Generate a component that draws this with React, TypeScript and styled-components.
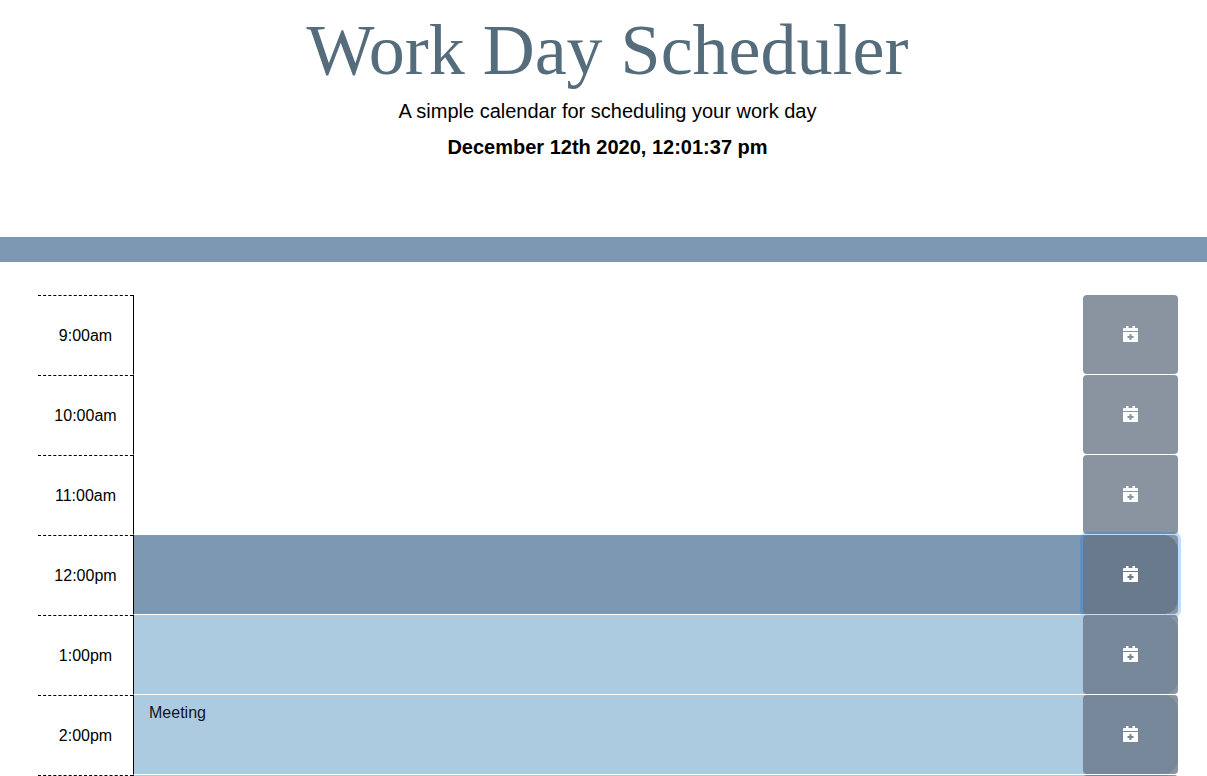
import React from "react";
import styled, { createGlobalStyle } from "styled-components";

const GlobalStyle = createGlobalStyle`
  *, *::before, *::after { box-sizing: border-box; }
  html { scrollbar-width: none; }
  body {
    margin: 0;
    background: #ffffff;
    color: #000000;
    font-family: "Liberation Sans", Arial, sans-serif;
    font-size: 16px;
    line-height: 24px;
  }
`;

type Phase = "past" | "present" | "future";

const phaseColor: Record<Phase, string> = {
  past: "#ffffff",
  present: "#7d98b3",
  future: "#adcbe0",
};

const Header = styled.header`
  padding: 5px 0 74px 8px;
  text-align: center;
  border-bottom: 25px solid #7d98b3;
`;

const Title = styled.h1`
  margin: 0;
  color: #546c7b;
  font-family: "Liberation Serif", "Times New Roman", serif;
  font-size: 72px;
  font-weight: 400;
  line-height: 90px;
`;

const Lead = styled.p<{ $strong?: boolean }>`
  margin: 0 0 4px;
  font-size: 20px;
  line-height: 32px;
  font-weight: ${(p) => (p.$strong ? 700 : 400)};

  &:last-child { margin-bottom: 0; }
`;

const Schedule = styled.main`
  padding: 33px 29px 0 38px;
`;

const Row = styled.div`
  display: grid;
  grid-template-columns: 1fr 10fr 1fr;
  height: 80px;
`;

const Hour = styled.label`
  grid-area: 1 / 1;
  display: flex;
  align-items: center;
  justify-content: center;
  border-top: 1px dashed #000000;
`;

const Entry = styled.textarea<{ $phase: Phase }>`
  grid-area: 1 / 2 / 2 / 4;
  width: 100%;
  height: 100%;
  margin: 0;
  padding: 6px 110px 6px 15px;
  border: 0;
  border-left: 1px solid #000000;
  border-bottom: 1px solid #ffffff;
  border-radius: 0 15px 15px 0;
  outline: 0;
  resize: none;
  overflow: hidden;
  background: ${(p) => phaseColor[p.$phase]};
  color: #10161c;
  font: inherit;
`;

const SaveButton = styled.button<{ $active?: boolean }>`
  grid-area: 1 / 3;
  display: flex;
  align-items: center;
  justify-content: center;
  margin: 0 0 1px;
  padding: 0;
  border: 0;
  border-radius: 4px;
  background: rgba(99, 112, 128, 0.75);
  box-shadow: ${(p) => (p.$active ? "0 0 0 3px rgba(0, 123, 255, 0.25)" : "none")};
  color: #ffffff;
  cursor: pointer;
`;

const CalendarPlus = () => (
  <svg width="15" height="17" viewBox="0 0 15 17" fill="currentColor" aria-hidden="true">
    <path d="M0 5V3Q0 2 1 2H3V0H5.500V2H9.500V0H12V2H14Q15 2 15 3V5Z" />
    <path
      fillRule="evenodd"
      d="M0 6H15V15.200Q15 16 14.200 16H0.800Q0 16 0 15.200ZM6.500 8V10H4.500V12H6.500V14H8.500V12H10.500V10H8.500V8Z"
    />
  </svg>
);

const slots: { time: string; phase: Phase; text?: string; active?: boolean }[] = [
  { time: "9:00am", phase: "past" },
  { time: "10:00am", phase: "past" },
  { time: "11:00am", phase: "past" },
  { time: "12:00pm", phase: "present", active: true },
  { time: "1:00pm", phase: "future" },
  { time: "2:00pm", phase: "future", text: "Meeting" },
  { time: "3:00pm", phase: "future" },
];

export default function App() {
  return (
    <>
      <GlobalStyle />
      <Header>
        <Title>Work Day Scheduler</Title>
        <Lead>A simple calendar for scheduling your work day</Lead>
        <Lead $strong>December 12th 2020, 12:01:37 pm</Lead>
      </Header>
      <Schedule>
        {slots.map((slot) => (
          <Row key={slot.time}>
            <Hour htmlFor={`entry-${slot.time}`}>{slot.time}</Hour>
            <Entry id={`entry-${slot.time}`} $phase={slot.phase} defaultValue={slot.text} />
            <SaveButton type="button" $active={slot.active} aria-label={`Save ${slot.time}`}>
              <CalendarPlus />
            </SaveButton>
          </Row>
        ))}
      </Schedule>
    </>
  );
}
